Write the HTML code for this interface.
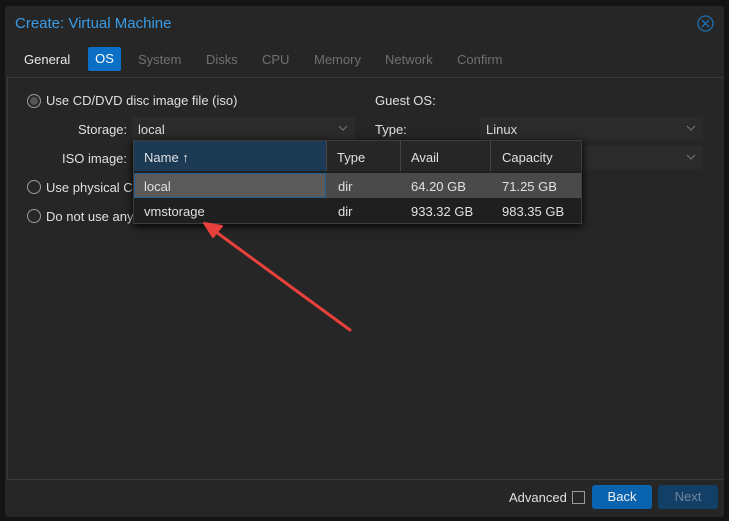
<!DOCTYPE html>
<html><head><style>
body{margin:0;width:729px;height:521px;background:#141414;font-family:"Liberation Sans",sans-serif;font-size:13px;color:#e0e0e0;position:relative;overflow:hidden}
.dlg{position:absolute;left:5px;top:6px;width:719px;height:511px;background:#262626;border-radius:3px}
.a{position:absolute;white-space:nowrap}
.title{left:15px;top:15px;font-size:15px;color:#3a9ce6}
.tab{top:52px;color:#707070}
.panel{position:absolute;left:7px;top:77px;width:715px;height:401px;border:1px solid #3a3a3a;border-right:none;background:#262626}
.radio{position:absolute;width:12px;height:12px;border:1px solid #9a9a9a;border-radius:50%}
.field{position:absolute;height:23px;background:#2b2b2b;color:#ddd}
.chev{position:absolute;right:7px;top:8px}
.pick{position:absolute;left:133px;top:140px;width:447px;height:82px;background:#1f1f1f;border:1px solid #3c3c3c;box-shadow:0 2px 8px #000}
.row{position:absolute;left:0;width:447px;height:25px}
.btn{position:absolute;top:485px;height:24px;width:60px;border-radius:3px;text-align:center;line-height:24px}
</style></head><body>
<div class="dlg"></div>
<div class="a title">Create: Virtual Machine</div>
<svg class="a" style="left:697px;top:15px" width="17" height="17"><circle cx="8.5" cy="8.5" r="7.5" fill="none" stroke="#1f6fb0" stroke-width="1.3"/><path d="M5 5L12 12M12 5L5 12" stroke="#1f6fb0" stroke-width="1.3"/></svg>
<div class="a tab" style="left:24px;color:#e8e8e8">General</div>
<div class="a" style="left:88px;top:47px;width:33px;height:24px;background:#0b6fc5;border-radius:2px;color:#fff;text-align:center;line-height:24px">OS</div>
<div class="a tab" style="left:138px">System</div>
<div class="a tab" style="left:206px">Disks</div>
<div class="a tab" style="left:262px">CPU</div>
<div class="a tab" style="left:314px">Memory</div>
<div class="a tab" style="left:385px">Network</div>
<div class="a tab" style="left:457px">Confirm</div>
<div class="panel"></div>
<div class="radio" style="left:27px;top:94px;background:#555;box-shadow:inset 0 0 0 2px #262626"></div>
<div class="a" style="left:46px;top:93px">Use CD/DVD disc image file (iso)</div>
<div class="a" style="left:78px;top:122px">Storage:</div>
<div class="field" style="left:132px;top:117px;width:223px"><span class="a" style="left:6px;top:5px">local</span><svg class="chev" width="10" height="6"><path d="M1 1L5 5L9 1" fill="none" stroke="#777"/></svg></div>
<div class="a" style="left:62px;top:151px">ISO image:</div>
<div class="radio" style="left:27px;top:180px"></div>
<div class="a" style="left:46px;top:180px">Use physical C</div>
<div class="radio" style="left:27px;top:209px"></div>
<div class="a" style="left:46px;top:209px">Do not use any</div>
<div class="a" style="left:375px;top:93px">Guest OS:</div>
<div class="a" style="left:375px;top:122px">Type:</div>
<div class="field" style="left:480px;top:117px;width:223px"><span class="a" style="left:6px;top:5px">Linux</span><svg class="chev" width="10" height="6"><path d="M1 1L5 5L9 1" fill="none" stroke="#777"/></svg></div>
<div class="field" style="left:480px;top:146px;width:223px"><svg class="chev" width="10" height="6"><path d="M1 1L5 5L9 1" fill="none" stroke="#777"/></svg></div>
<div class="pick">
<div class="row" style="top:0;height:30px;background:#262626">
<div class="a" style="left:0;top:0;width:192px;height:30px;background:#1d3a55"></div>
<div class="a" style="left:192px;top:0;width:1px;height:30px;background:#444"></div>
<div class="a" style="left:266px;top:0;width:1px;height:30px;background:#444"></div>
<div class="a" style="left:356px;top:0;width:1px;height:30px;background:#444"></div>
<div class="a" style="left:10px;top:9px">Name &#8593;</div>
<div class="a" style="left:203px;top:9px">Type</div>
<div class="a" style="left:277px;top:9px">Avail</div>
<div class="a" style="left:368px;top:9px">Capacity</div>
</div>
<div class="row" style="top:32px;background:#5a5a5a">
<div class="a" style="left:0;top:0;width:190px;height:23px;border:1px solid #1f5f95"></div>
<div class="a" style="left:192px;top:0;width:255px;height:25px;background:#4a4a4a"></div>
<div class="a" style="left:10px;top:6px">local</div><div class="a" style="left:204px;top:6px">dir</div><div class="a" style="left:277px;top:6px">64.20 GB</div><div class="a" style="left:368px;top:6px">71.25 GB</div></div>
<div class="row" style="top:57px"><div class="a" style="left:10px;top:6px">vmstorage</div><div class="a" style="left:204px;top:6px">dir</div><div class="a" style="left:277px;top:6px">933.32 GB</div><div class="a" style="left:368px;top:6px">983.35 GB</div></div>
</div>
<svg class="a" style="left:0;top:0" width="729" height="521"><path d="M350 330L212 229" stroke="#e8413c" stroke-width="3" stroke-linecap="round"/><path d="M204 223L222 226L213 237Z" fill="#e8413c" stroke="#e8413c" stroke-width="2" stroke-linejoin="round"/></svg>
<div class="a" style="left:509px;top:490px">Advanced</div>
<div class="a" style="left:572px;top:491px;width:11px;height:11px;border:1px solid #999"></div>
<div class="btn" style="left:592px;background:#0a63ae;color:#f0f0f0">Back</div>
<div class="btn" style="left:658px;background:#123f65;color:#6e8599">Next</div>
</body></html>
